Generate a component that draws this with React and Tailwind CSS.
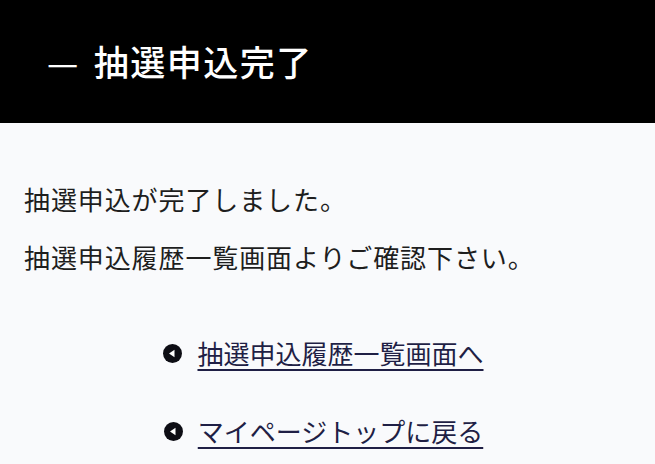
import React from "react";

const font = { fontFamily: '"Noto Sans CJK JP", "Noto Sans", sans-serif' };

const BackIcon = () => (
    <svg width="19" height="19" viewBox="0 0 19 19" className="shrink-0">
        <circle cx="9.5" cy="9.5" r="9.5" fill="#0d0d14" />
        <path d="M6 9.5 L11.5 5.8 L11.5 13.2 Z" fill="#fff" />
    </svg>
);

const LinkRow = ({ label }) => (
    <a href="#" className="flex items-center gap-[15px] text-[26px] leading-none text-[#1f1f45] underline underline-offset-[5px] decoration-[1.5px]">
        <BackIcon />
        <span>{label}</span>
    </a>
);

export default function App() {
    return (
        <div className="w-[655px] h-[464px] overflow-hidden bg-[#f9fafc]" style={font}>
            {/* header */}
            <div className="h-[123px] bg-black flex items-center pl-[47px] pb-[3px]">
                <h1 className="text-white text-[35px] leading-none tracking-[1.5px] font-medium">
                    <span className="mr-[14px] font-normal">—</span>抽選申込完了
                </h1>
            </div>

            {/* message */}
            <div className="px-[24px] pt-[63px] text-[26px] leading-none text-[#1e1e1e] flex flex-col gap-[32px] tracking-[0.9px]">
                <p>抽選申込が完了しました。</p>
                <p>抽選申込履歴一覧画面よりご確認下さい。</p>
            </div>

            {/* links */}
            <div className="flex flex-col items-center pt-[70px] gap-[52px] pr-[8px]">
                <LinkRow label="抽選申込履歴一覧画面へ" />
                <LinkRow label="マイページトップに戻る" />
            </div>
        </div>
    );
}
